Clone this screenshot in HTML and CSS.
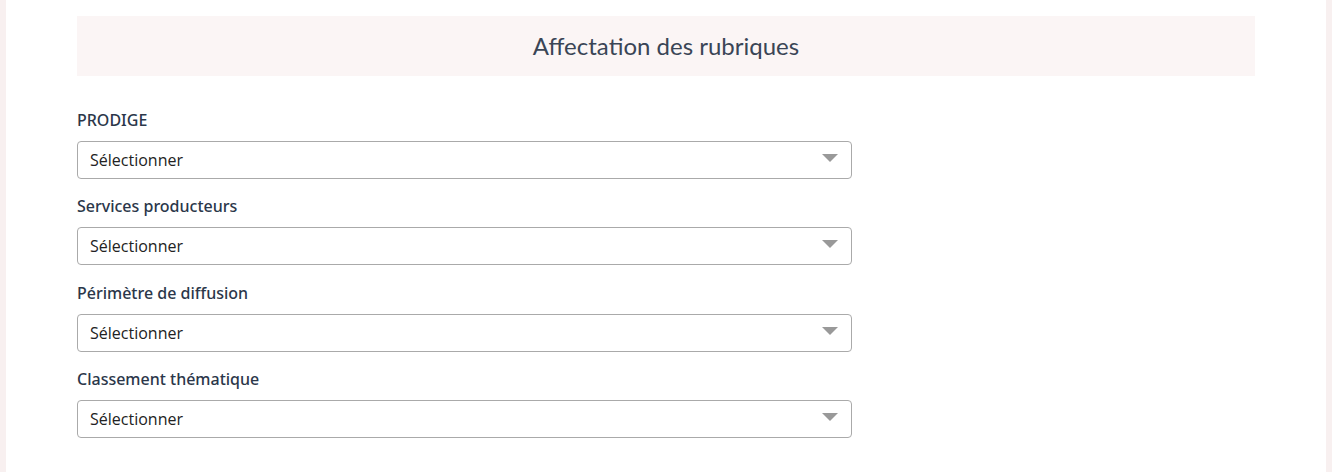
FILE: index.html
```html
<!DOCTYPE html>
<html lang="fr">
<head>
<meta charset="utf-8">
<link rel="stylesheet" href="styles.css">
</head>
<body>
<div class="page">
  <div class="card">
    <div class="header"><h1 class="title">Affectation des rubriques</h1></div>
    <div class="form">
      <div class="field">
        <label class="label">PRODIGE</label>
        <div class="select"><span>Sélectionner</span><span class="caret"></span></div>
      </div>
      <div class="field">
        <label class="label">Services producteurs</label>
        <div class="select"><span>Sélectionner</span><span class="caret"></span></div>
      </div>
      <div class="field">
        <label class="label">Périmètre de diffusion</label>
        <div class="select"><span>Sélectionner</span><span class="caret"></span></div>
      </div>
      <div class="field">
        <label class="label">Classement thématique</label>
        <div class="select"><span>Sélectionner</span><span class="caret"></span></div>
      </div>
    </div>
  </div>
</div>
</body>
</html>
```
FILE: styles.css
```css
html, body { margin: 0; padding: 0; }
body {
  background: #f8f0f0;
  font-family: "Open Sans", "Noto Sans", sans-serif;
  color: #2f3b4d;
  width: 1332px;
  height: 472px;
  overflow: hidden;
}
.page {
  padding: 0 6px;
  height: 472px;
  box-sizing: border-box;
}
.card {
  background: #fff;
  height: 100%;
  padding: 16px 71px 0 71px;
  box-sizing: border-box;
}
.header {
  background: #fbf5f5;
  height: 60px;
  display: flex;
  align-items: center;
  justify-content: center;
}
.title {
  margin: 0;
  font-family: Lato, sans-serif;
  font-weight: 400;
  font-size: 24px;
  color: #3a4556;
  line-height: 1;
}
.form {
  padding-top: 33px;
  display: flex;
  flex-direction: column;
  gap: 16.3px;
}
.field {
  width: 775px;
  display: flex;
  flex-direction: column;
}
.label {
  font-family: "Noto Sans", "Open Sans", sans-serif;
  font-size: 16px;
  font-weight: 500;
  line-height: 22px;
  height: 24px;
  color: #2b374a;
  margin-bottom: 8px;
}
.select {
  height: 38px;
  box-sizing: border-box;
  border: 1px solid #aaaaaa;
  border-radius: 4px;
  display: flex;
  align-items: center;
  justify-content: space-between;
  padding: 0 13px 0 12px;
  font-size: 16px;
  color: #222;
}
.caret {
  width: 0;
  height: 0;
  border-left: 8px solid transparent;
  border-right: 8px solid transparent;
  border-top: 8px solid #999;
  margin-top: -4px;
}
```
